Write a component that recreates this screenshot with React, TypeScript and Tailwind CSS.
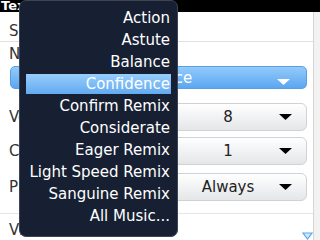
import React from "react";

const items = [
  "Action",
  "Astute",
  "Balance",
  "Confidence",
  "Confirm Remix",
  "Considerate",
  "Eager Remix",
  "Light Speed Remix",
  "Sanguine Remix",
  "All Music...",
];

const Arrow = ({ color }: { color: string }) => (
  <svg width="13" height="6" viewBox="0 0 13 6">
    <path d="M0 0H13L6.5 6Z" fill={color} />
  </svg>
);

const Choice = ({ value }: { value: string }) => (
  <div className="relative w-[158px] h-full rounded-[6px] border border-[#cfd2d6] bg-linear-to-b from-white to-[#e4e6e8] flex items-center justify-center text-[#222]">
    {value}
    <div className="absolute right-[14px] top-1/2 -translate-y-1/2">
      <Arrow color="#000" />
    </div>
  </div>
);

const App = () => {
  return (
    <div
      className="relative w-[320px] h-[240px] overflow-hidden bg-white text-[15px] leading-[20px]"
      style={{ fontFamily: '"DejaVu Sans", sans-serif' }}
    >
      <div className="h-[12px] bg-black text-white font-bold text-[13px] leading-[12px] pl-[1px]">
        Text Message
      </div>

      <div className="flex h-[228px]">
        <div className="flex-1 flex flex-col text-[#333]">
          <div className="h-[32px] pt-[9px] pl-[9px] border-b border-[#e0e0e0]">
            Sounds
          </div>
          <div className="pl-[9px] mt-[2px]">Notifier Tune</div>
          <div className="relative mt-[2px] ml-[10px] mr-[6px] h-[25px] rounded-[5px] border border-[#5a9fe6] bg-linear-to-b from-[#93cbfb] to-[#5ba6f0] flex items-center justify-center pr-[17px] text-white">
            Confidence
            <div className="absolute right-[16px] top-[12px]">
              <Arrow color="#fff" />
            </div>
          </div>
          <div className="mt-[14px] h-[30px] flex items-center justify-between pl-[9px] pr-[6px]">
            <span>Volume</span>
            <Choice value="8" />
          </div>
          <div className="mt-[6px] h-[31px] flex items-center justify-between pl-[9px] pr-[6px]">
            <span>Count</span>
            <Choice value="1" />
          </div>
          <div className="mt-[8px] h-[30px] flex items-center justify-between pl-[9px] pr-[6px]">
            <span>Play Sound</span>
            <Choice value="Always" />
          </div>
          <div className="mt-[12px] pt-[6px] pl-[9px] border-t border-[#e6e6e6]">
            Vibrate
          </div>
        </div>
        <div className="w-[7px] border-l border-[#d6d6d6] bg-[#f2f2f2]" />
      </div>

      <svg
        className="absolute right-[7px] bottom-0"
        width="11"
        height="8"
        viewBox="0 0 11 8"
      >
        <path d="M1 1H10L5.5 7Z" fill="#cfe6fb" stroke="#5aa6ee" strokeWidth="1.2" />
      </svg>

      <div className="absolute left-[19px] top-0 w-[159px] h-[237px] rounded-[7px] border border-[#3d4554] bg-[#172033] pt-[6px]">
        {items.map((item) => (
          <div key={item} className="h-[22px] px-[6px] py-[1px]">
            <div
              className={
                item === "Confidence"
                  ? "h-full flex items-center justify-end pr-[1px] text-white bg-linear-to-b from-[#97cdfb] to-[#62aaf1]"
                  : "h-full flex items-center justify-end pr-[1px] text-white"
              }
            >
              {item}
            </div>
          </div>
        ))}
      </div>
    </div>
  );
};

export default App;
